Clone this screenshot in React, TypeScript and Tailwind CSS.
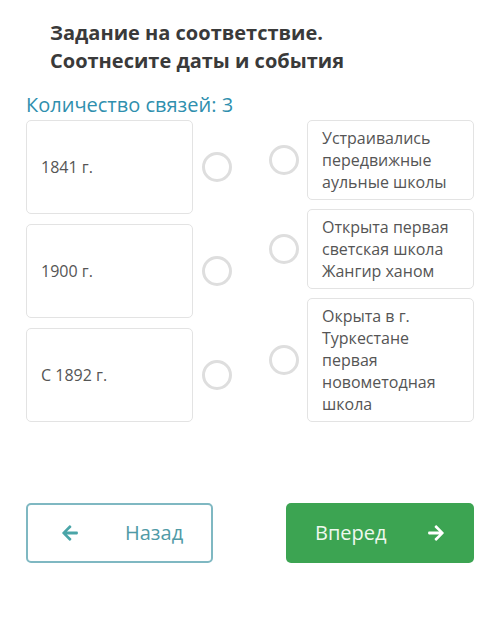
import { FaArrowLeft, FaArrowRight } from "react-icons/fa";

const dates = ["1841 г.", "1900 г.", "С 1892 г."];

const events = [
  ["Устраивались", "передвижные", "аульные школы"],
  ["Открыта первая", "светская школа", "Жангир ханом"],
  ["Окрыта в г.", "Туркестане", "первая", "новометодная", "школа"],
];

function Dot() {
  return <span className="block h-[30px] w-[30px] shrink-0 rounded-full border-[3px] border-[#dedede] bg-white" />;
}

export default function App() {
  return (
    <div className="h-[631px] w-[500px] bg-white px-[26px] pt-[19px] font-['Open_Sans',sans-serif]">
      <h1 className="pl-[24px] text-[20px] font-bold leading-[28px] text-[#3a3a3a]">
        Задание на соответствие.
        <br />
        Соотнесите даты и события
      </h1>

      <p className="mt-[17px] text-[20px] leading-[26px] text-[#2f8fae]">Количество связей: 3</p>

      <div className="mt-[2px] flex justify-between">
        {/* Left: dates */}
        <div className="flex flex-col gap-[10px]">
          {dates.map((d) => (
            <div key={d} className="flex items-center gap-[9px]">
              <div className="flex h-[94px] w-[167px] items-center rounded-[5px] border border-[#e3e3e3] px-[14px] text-[16px] text-[#555]">
                {d}
              </div>
              <Dot />
            </div>
          ))}
        </div>

        {/* Right: events */}
        <div className="flex flex-col gap-[9px]">
          {events.map((lines, i) => (
            <div key={i} className="flex items-center gap-[8px]">
              <Dot />
              <div className="w-[167px] rounded-[5px] border border-[#e3e3e3] px-[14px] py-[6px] text-[16px] leading-[22px] text-[#555]">
                {lines.map((l) => (
                  <div key={l}>{l}</div>
                ))}
              </div>
            </div>
          ))}
        </div>
      </div>

      <div className="mt-[81px] flex justify-between">
        <button
          type="button"
          className="flex h-[60px] w-[187px] items-center rounded-[5px] border-2 border-[#7fb8c2] bg-white pl-[33px] text-[20px] text-[#4f9aa6]"
        >
          <FaArrowLeft size={18} className="text-[#4aa5a8]" />
          <span className="ml-[46px]">Назад</span>
        </button>
        <button
          type="button"
          className="flex h-[60px] w-[188px] items-center justify-between rounded-[5px] bg-[#3ca452] px-[29px] text-[20px] text-[#eef8ee]"
        >
          <span>Вперед</span>
          <FaArrowRight size={18} className="text-white" />
        </button>
      </div>
    </div>
  );
}
